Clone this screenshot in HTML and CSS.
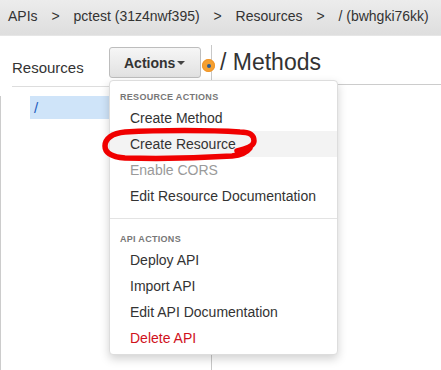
FILE: index.html
```html
<!DOCTYPE html>
<html lang="en">
<head>
  <meta charset="UTF-8">
  <title>API Gateway - Resources</title>
  <link rel="stylesheet" href="styles.css">
</head>
<body>

<div class="breadcrumb">
  <span>APIs</span>
  <span class="sep">&gt;</span>
  <span>pctest (31z4nwf395)</span>
  <span class="sep">&gt;</span>
  <span>Resources</span>
  <span class="sep">&gt;</span>
  <span>/ (bwhgki76kk)</span>
</div>

<div class="workspace">
  <div class="sidebar">
    <div class="sidebar-head">
      <h2>Resources</h2>
      <div class="actions">
        <button class="actions-btn">Actions<span class="caret"></span></button>

        <!-- dropdown -->
        <div class="menu">
          <div class="menu-header">Resource Actions</div>
          <div class="menu-item">Create Method</div>
          <div class="menu-item hover">Create Resource</div>
          <div class="menu-item disabled">Enable CORS</div>
          <div class="menu-item">Edit Resource Documentation</div>
          <div class="divider"></div>
          <div class="menu-header">API Actions</div>
          <div class="menu-item">Deploy API</div>
          <div class="menu-item">Import API</div>
          <div class="menu-item">Edit API Documentation</div>
          <div class="menu-item danger">Delete API</div>
        </div>
      </div>
    </div>
    <ul class="tree">
      <li class="selected">/</li>
    </ul>
  </div>

  <div class="splitter"><span class="handle"></span></div>

  <div class="content">
    <div class="content-head">
      <h1>/ Methods</h1>
    </div>
  </div>
</div>

<!-- annotation scribble -->
<svg class="scribble" width="160" height="40" viewBox="0 0 160 40">
  <path d="M137 27 C146 25 154 22 154 17 C154 11 150 8 140 8 C110 6 60 6 25 8 C12 9 5 15 5 22 C5 29 12 33 25 34 C60 35 100 34 132 32 C141 31 147 28 150 24"
        fill="none" stroke="#f00000" stroke-width="5.5" stroke-linecap="round" stroke-linejoin="round"/>
</svg>

</body>
</html>
```

FILE: styles.css
```css
body {
  margin: 0;
  font-family: 'Liberation Sans', Arial, sans-serif;
  color: #333;
  background: #fff;
  height: 370px;
  overflow: hidden;
  position: relative;
}

.breadcrumb {
  height: 35px;
  line-height: 33px;
  padding-left: 8px;
  font-size: 14px;
  color: #333;
  background: linear-gradient(#ececec, #dedede);
  border-bottom: 1px solid #e6e6e6;
  white-space: nowrap;
  overflow: hidden;
}

.breadcrumb .sep {
  margin: 0 10px;
}

.workspace {
  display: flex;
  padding-top: 9px;
  height: 325px;
}

.sidebar {
  width: 211px;
  flex-shrink: 0;
  display: flex;
  flex-direction: column;
}

.sidebar-head {
  display: flex;
  align-items: center;
  margin-left: 12px;
  padding: 2px 0 8px;
  border-bottom: 1px solid #ddd;
}

.sidebar-head h2 {
  margin: 0;
  padding-top: 9px;
  width: 97px;
  font-size: 15px;
  font-weight: normal;
}

.actions {
  position: relative;
}

.actions-btn {
  display: flex;
  align-items: center;
  height: 31px;
  padding: 0 15px 0 14px;
  font-family: inherit;
  font-size: 14px;
  font-weight: bold;
  color: #333;
  background: linear-gradient(#f6f6f6, #e1e1e1);
  border: 1px solid #bdbdbd;
  border-radius: 3px;
}

.caret {
  margin-left: 2px;
  margin-top: 1px;
  border-left: 4px solid transparent;
  border-right: 4px solid transparent;
  border-top: 4px solid #444;
}

.menu {
  position: absolute;
  top: 33px;
  left: 0;
  width: 227px;
  padding-bottom: 3px;
  background: #fff;
  border: 1px solid #ddd;
  border-radius: 4px;
  box-shadow: 0 4px 10px rgba(0, 0, 0, 0.18);
  z-index: 10;
}

.menu-header {
  padding: 10px 10px 2px;
  line-height: 12px;
  font-size: 9px;
  font-weight: bold;
  letter-spacing: 0.3px;
  text-transform: uppercase;
  color: #777;
}

.menu-item {
  height: 26px;
  line-height: 27px;
  padding-left: 20px;
  font-size: 14px;
  color: #333;
}

.menu-item.hover {
  background: #f3f3f3;
}

.menu-item.disabled {
  color: #9a9a9a;
}

.menu-item.danger {
  color: #d0111b;
}

.divider {
  margin: 9px 0 4px;
  border-top: 1px solid #e3e3e3;
}

.tree {
  flex: 1;
  list-style: none;
  margin: 9px 0 0;
  padding: 0 0 0 29px;
  border-left: 1px solid #ccc;
}

.tree li {
  height: 23px;
  line-height: 23px;
  padding-left: 4px;
  font-size: 15px;
  color: #1f5fbf;
}

.tree li.selected {
  background: #cfe4f9;
}

.splitter {
  position: relative;
  width: 1px;
  background: #c8c8c8;
}

.handle {
  position: absolute;
  top: 14px;
  left: -9px;
  width: 13px;
  height: 13px;
  border-radius: 50%;
  background: #f5a031;
  box-shadow: 0 0 0 1px #f0962a inset;
}

.handle::after {
  content: '';
  position: absolute;
  top: 5px;
  left: 5px;
  width: 4px;
  height: 4px;
  border-radius: 50%;
  background: #2b5c94;
}

.content {
  flex: 1;
}

.content-head {
  padding: 2px 0 7px 8px;
  border-bottom: 1px solid #ccc;
}

.content-head h1 {
  margin: 0;
  line-height: 30px;
  font-size: 23px;
  font-weight: normal;
  color: #333;
}

.scribble {
  position: absolute;
  top: 124px;
  left: 100px;
  z-index: 20;
}
```
